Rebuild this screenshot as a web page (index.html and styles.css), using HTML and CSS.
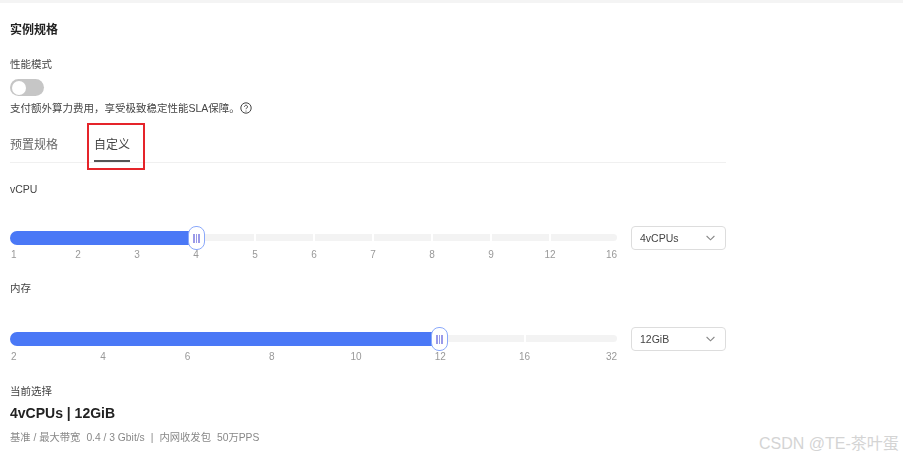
FILE: index.html
```html
<!DOCTYPE html>
<html lang="zh-CN">
<head>
<meta charset="utf-8">
<title>实例规格</title>
<link rel="stylesheet" href="styles.css">
</head>
<body>
<main class="page">
  <h1 class="title">实例规格</h1>
  <div class="label perf-label">性能模式</div>
  <div class="toggle"><span class="knob"></span></div>
  <p class="desc">支付额外算力费用，享受极致稳定性能SLA保障。
    <svg class="help" viewBox="0 0 12 12" width="12" height="12" aria-hidden="true">
      <circle cx="6" cy="6" r="5.2" fill="none" stroke="#444" stroke-width="1"/>
      <path d="M4.5 4.7a1.5 1.5 0 1 1 2.3 1.3c-.55.35-.8.6-.8 1.2" fill="none" stroke="#444" stroke-width="1"/>
      <circle cx="6" cy="9" r=".6" fill="#444"/>
    </svg>
  </p>
  <div class="tabs">
    <span class="tab">预置规格</span>
    <span class="tab tab-active">自定义</span>
    <span class="annotation"></span>
  </div>

  <div class="label vcpu-label">vCPU</div>
  <div class="slider-row">
    <div class="slider">
      <div class="track track-cpu">
        <i></i><i></i><i></i><i></i><i></i><i></i><i></i><i></i><i></i><i></i>
      </div>
      <div class="fill" style="width:186px"></div>
      <div class="thumb" style="left:178px"><b></b><b></b><b></b></div>
      <div class="scale scale-cpu">
        <span>1</span><span>2</span><span>3</span><span>4</span><span>5</span><span>6</span><span>7</span><span>8</span><span>9</span><span>12</span><span>16</span>
      </div>
    </div>
    <div class="select"><span>4vCPUs</span>
      <svg viewBox="0 0 9 6" width="9" height="6" aria-hidden="true"><path d="M.6 1 4.5 4.8 8.4 1" fill="none" stroke="#888" stroke-width="1.1"/></svg>
    </div>
  </div>

  <div class="label mem-label">内存</div>
  <div class="slider-row slider-row-mem">
    <div class="slider">
      <div class="track track-mem">
        <i></i><i></i><i></i><i></i><i></i><i></i><i></i>
      </div>
      <div class="fill" style="width:430px"></div>
      <div class="thumb" style="left:421px"><b></b><b></b><b></b></div>
      <div class="scale scale-mem">
        <span>2</span><span>4</span><span>6</span><span>8</span><span>10</span><span>12</span><span>16</span><span>32</span>
      </div>
    </div>
    <div class="select"><span>12GiB</span>
      <svg viewBox="0 0 9 6" width="9" height="6" aria-hidden="true"><path d="M.6 1 4.5 4.8 8.4 1" fill="none" stroke="#888" stroke-width="1.1"/></svg>
    </div>
  </div>

  <div class="label cur-label">当前选择</div>
  <div class="current">4vCPUs | 12GiB</div>
  <div class="meta"><span>基准 / 最大带宽</span><span>0.4 / 3 Gbit/s</span><span>|</span><span>内网收发包</span><span>50万PPS</span></div>
</main>
<div class="watermark">CSDN @TE-茶叶蛋</div>
</body>
</html>
```
FILE: styles.css
```css
* { box-sizing: border-box; }
html, body { margin: 0; height: 100%; overflow: hidden; background: #fff; }
body {
  font-family: "Liberation Sans", "Noto Sans CJK SC", sans-serif;
  color: #333;
  border-top: 3px solid #f4f4f4;
}
.page { width: 726px; padding-left: 10px; filter: blur(0.3px); }
.title { margin: 20px 0 0; font-size: 12px; line-height: 14px; font-weight: 700; color: #222; }
.label { font-size: 10.5px; line-height: 14px; color: #444; }
.perf-label { margin-top: 20px; }
.toggle { width: 34px; height: 17px; margin-top: 8px; border-radius: 9px; background: #c6c6c6; padding: 1.5px; }
.knob { display: block; width: 14px; height: 14px; border-radius: 50%; background: #fff; }
.desc { display: flex; align-items: center; margin: 4px 0 0; font-size: 10.5px; line-height: 16px; color: #444; }
.help { flex: none; }
.tabs { position: relative; display: flex; gap: 36px; height: 38px; margin-top: 9px; border-bottom: 1px solid #f0f0f0; padding-top: 12px; }
.tab { font-size: 12px; line-height: 16px; color: #666; height: 25px; }
.tab-active { color: #444; border-bottom: 2px solid #555; }
.annotation { position: absolute; left: 77px; top: -2px; width: 58px; height: 47px; border: 2px solid #e5242a; }
.vcpu-label { margin-top: 19px; }
.slider-row { display: flex; justify-content: space-between; align-items: flex-start; margin-top: 32px; }
.slider-row-mem { margin-top: 34px; }
.slider { position: relative; width: 607px; padding-top: 6px; }
.track { display: flex; gap: 2px; height: 7px; border-radius: 4px; overflow: hidden; }
.track i { display: block; background: #f3f3f3; }
.track-cpu i { flex: 0 0 57px; }
.track-cpu i:first-child { flex-basis: 66.5px; }
.track-cpu i:last-child { flex: 1; }
.track-mem i { flex: 0 0 82.3px; }
.track-mem i:first-child { flex-basis: 93px; }
.track-mem i:last-child { flex: 1; }
.fill { position: absolute; left: 0; top: 3px; height: 14px; border-radius: 7px; background: #4a78f6; }
.thumb { position: absolute; top: -2px; display: flex; align-items: center; justify-content: center; gap: 1px; width: 17px; height: 24px; border: 1.5px solid #8aa8fa; border-radius: 8px; background: #fff; }
.thumb b { display: block; width: 1.5px; height: 9px; background: #9a9ae8; }
.scale { display: flex; margin-top: 7px; font-size: 10px; line-height: 14px; color: #999; }
.scale span { text-align: center; }
.scale span:first-child { text-align: left; }
.scale span:last-child { text-align: right; flex: 1; }
.scale-cpu span { flex: 0 0 59px; }
.scale-cpu span:first-child { flex-basis: 38.5px; padding-left: 1px; }
.scale-mem { margin-top: 8px; }
.scale-mem span { flex: 0 0 84.3px; }
.scale-mem span:first-child { flex-basis: 51px; padding-left: 1px; }
.select { display: flex; align-items: center; justify-content: space-between; width: 95px; height: 24px; margin-top: -2px; padding: 0 10px 0 8px; border: 1px solid #ddd; border-radius: 4px; font-size: 10.5px; color: #444; }
.mem-label { margin-top: 19px; }
.cur-label { margin-top: 20px; }
.current { margin-top: 7px; font-size: 14px; line-height: 17px; font-weight: 700; color: #222; }
.meta { display: flex; gap: 6px; margin-top: 9px; font-size: 10.3px; line-height: 14px; color: #888; }
.watermark { position: absolute; left: 759px; top: 434px; font-size: 16px; line-height: 20px; color: #d4d4d4; white-space: nowrap; }
```
